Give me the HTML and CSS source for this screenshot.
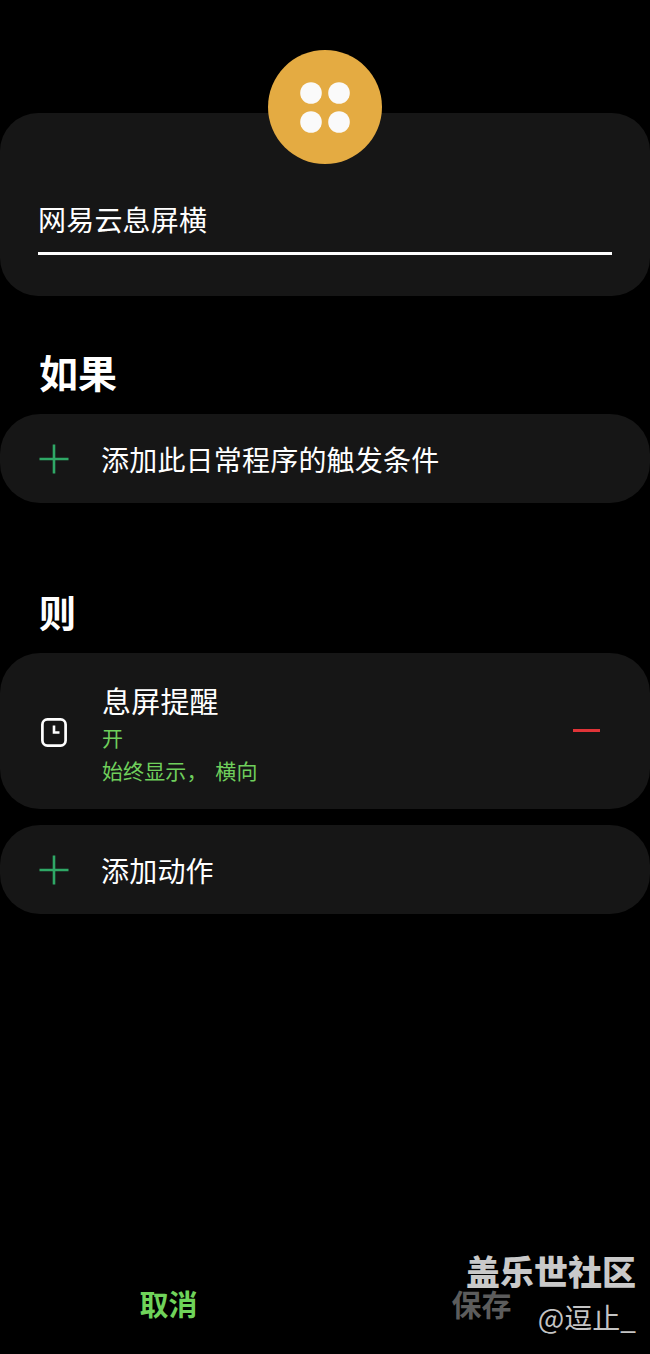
FILE: index.html
```html
<!DOCTYPE html>
<html lang="zh">
<head>
<meta charset="utf-8">
<title>网易云息屏横</title>
<link rel="stylesheet" href="styles.css">
</head>
<body>
<main class="page">
  <div class="name-section">
    <div class="badge">
      <svg width="50" height="51" viewBox="0 0 50 51"><g fill="#fafafa"><circle cx="11" cy="11" r="10.8"/><circle cx="39" cy="11" r="10.8"/><circle cx="11" cy="40" r="10.8"/><circle cx="39" cy="40" r="10.8"/></g></svg>
    </div>
    <div class="card name-card">
      <div class="name-input">网易云息屏横</div>
    </div>
  </div>

  <h2 class="heading heading-if">如果</h2>
  <div class="card row add-row">
    <svg class="plus" width="30" height="30" viewBox="0 0 30 30"><path d="M15 0.5V29.5M0.5 15H29.5" stroke="#2fa866" stroke-width="2.6" fill="none"/></svg>
    <span class="row-label">添加此日常程序的触发条件</span>
  </div>

  <h2 class="heading heading-then">则</h2>
  <div class="card row action-row">
    <svg class="clock" width="26" height="29" viewBox="0 0 26 29"><rect x="1.4" y="1.4" width="23.2" height="26.2" rx="5" stroke="#fff" stroke-width="2.7" fill="none"/><path d="M13 7.5V14.5H18.5" stroke="#fff" stroke-width="2.6" fill="none"/></svg>
    <div class="action-text">
      <div class="action-title">息屏提醒</div>
      <div class="action-sub">开</div>
      <div class="action-sub">始终显示， 横向</div>
    </div>
    <span class="minus"></span>
  </div>
  <div class="card row add-row add-action">
    <svg class="plus" width="30" height="30" viewBox="0 0 30 30"><path d="M15 0.5V29.5M0.5 15H29.5" stroke="#2fa866" stroke-width="2.6" fill="none"/></svg>
    <span class="row-label">添加动作</span>
  </div>

  <footer class="footer">
    <span class="btn btn-cancel">取消</span>
    <span class="btn btn-save">保存</span>
  </footer>
</main>
<div class="watermark">
  <div class="wm-brand">盖乐世社区</div>
  <div class="wm-user">@逗止_</div>
</div>
</body>
</html>
```

FILE: styles.css
```css
* { box-sizing: border-box; }
html, body { margin: 0; padding: 0; background: #000; }
body {
  width: 650px;
  height: 1354px;
  overflow: hidden;
  position: relative;
  color: #fff;
  font-family: "Noto Sans CJK SC", "Noto Sans", sans-serif;
}
.page { display: flex; flex-direction: column; height: 1354px; padding-top: 50px; }
.card { background: #161616; }
.name-section { display: flex; flex-direction: column; align-items: center; }
.badge {
  width: 114px; height: 114px; border-radius: 50%;
  background: #e4ab42;
  display: flex; align-items: center; justify-content: center;
  margin-bottom: -51px;
  position: relative; z-index: 1;
}
.name-card {
  width: 100%; height: 183px; border-radius: 38px;
  padding: 86px 38px 0;
}
.name-input {
  height: 56px; font-size: 28px; line-height: 40px; font-weight: 400; letter-spacing: 0.2px;
  border-bottom: 3px solid #fff;
}
.heading { margin: 0; font-weight: 700; font-size: 39px; line-height: 56px; padding-left: 39px; }
.heading-if { margin-top: 47px; margin-bottom: 15px; }
.heading-then { margin-top: 81px; margin-bottom: 13px; font-size: 37px; }
.row { display: flex; align-items: center; width: 100%; border-radius: 40px; }
.add-row { height: 89px; padding-left: 39px; }
.add-row .plus { margin-right: 32px; flex: none; }
.row-label { font-size: 28px; line-height: 40px; letter-spacing: 0.2px; }
.action-row { height: 156px; padding: 0 50px 0 41px; }
.clock { margin-right: 35px; margin-top: 2px; flex: none; }
.action-text { flex: 1; margin-top: 4px; }
.action-title { font-size: 29px; line-height: 42px; letter-spacing: 0.2px; }
.action-sub { font-size: 21px; line-height: 33px; color: #6fcf5c; letter-spacing: 0.1px; word-spacing: 3px; }
.minus { width: 27px; height: 2.5px; background: #e03438; margin-top: -1px; }
.add-action { margin-top: 16px; }
.footer { margin-top: auto; height: 98px; display: flex; }
.btn { text-align: center; font-size: 29px; font-weight: 700; }
.btn-cancel { color: #6fd35a; padding-left: 24px; flex: 0 0 313px; padding-top: 26px; line-height: 42px; }
.btn-save { color: #5c5c5c; font-weight: 700; padding-top: 32px; flex: 0 0 337px; font-size: 30px; line-height: 30px; }
.watermark {
  position: absolute; right: 14px; top: 1254px;
  display: flex; flex-direction: column; align-items: flex-end;
}
.wm-brand { font-size: 34px; line-height: 34px; font-weight: 900; color: #c9c9c9; }
.wm-user { font-size: 28px; line-height: 40px; color: #c4c4c4; margin-top: 9px; }
```
